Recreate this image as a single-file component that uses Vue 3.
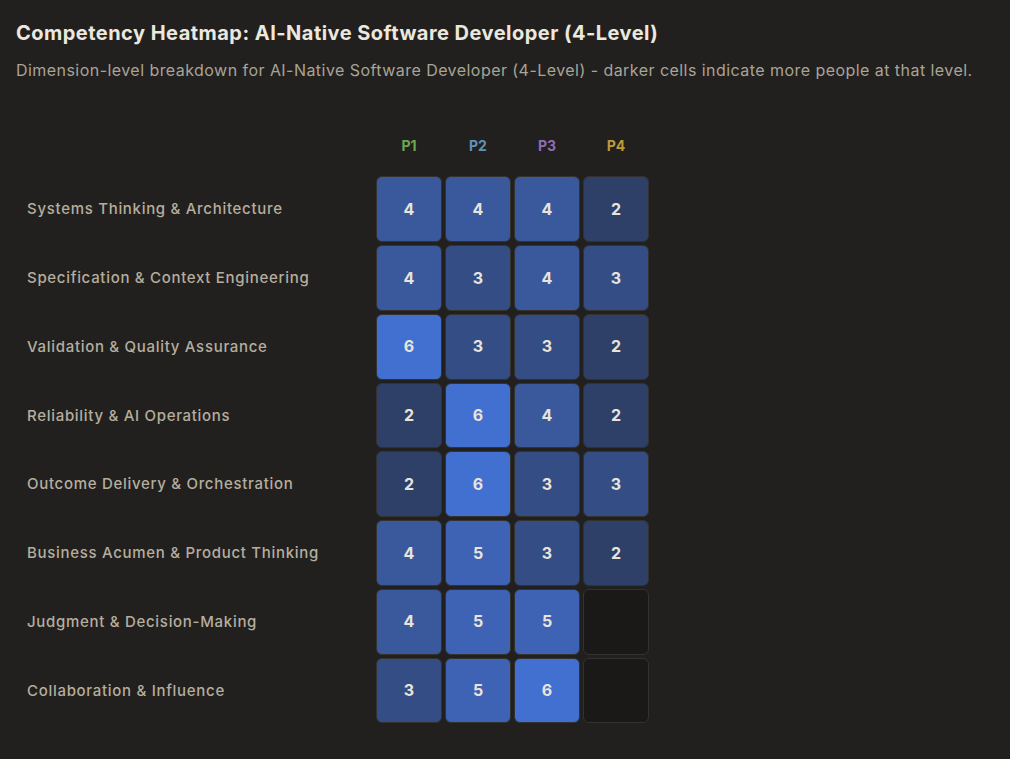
<template>
  <div class="page">
    <h2 class="title">Competency Heatmap: AI-Native Software Developer (4-Level)</h2>
    <p class="subtitle">Dimension-level breakdown for AI-Native Software Developer (4-Level) - darker cells indicate more people at that level.</p>

    <div class="heatmap">
      <div class="corner"></div>
      <div v-for="level in levels" :key="level.name" class="level" :style="{ color: level.color }">
        {{ level.name }}
      </div>

      <template v-for="row in rows" :key="row.name">
        <div class="dimension">{{ row.name }}</div>
        <div
          v-for="(count, i) in row.counts"
          :key="i"
          class="cell"
          :style="{ background: shade(count) }"
        >
          {{ count || '' }}
        </div>
      </template>
    </div>
  </div>
</template>

<script setup>
const levels = [
  { name: 'P1', color: '#6aa84f' },
  { name: 'P2', color: '#5b93bd' },
  { name: 'P3', color: '#8e6cb8' },
  { name: 'P4', color: '#c09a35' }
];

const rows = [
  { name: 'Systems Thinking & Architecture', counts: [4, 4, 4, 2] },
  { name: 'Specification & Context Engineering', counts: [4, 3, 4, 3] },
  { name: 'Validation & Quality Assurance', counts: [6, 3, 3, 2] },
  { name: 'Reliability & AI Operations', counts: [2, 6, 4, 2] },
  { name: 'Outcome Delivery & Orchestration', counts: [2, 6, 3, 3] },
  { name: 'Business Acumen & Product Thinking', counts: [4, 5, 3, 2] },
  { name: 'Judgment & Decision-Making', counts: [4, 5, 5, 0] },
  { name: 'Collaboration & Influence', counts: [3, 5, 6, 0] }
];

// cell colour by head count
const shades = {
  0: '#1a1917',
  2: '#2e4068',
  3: '#344d85',
  4: '#3a589c',
  5: '#3e63b4',
  6: '#4270d0'
};
const shade = (count) => shades[count];
</script>

<style scoped>
.page {
  padding: 20px 16px 0;
  color: #e8e4dc;
  font-family: Inter, sans-serif;
}

.title {
  margin: 0;
  font-size: 20px;
  line-height: 26px;
  font-weight: 700;
  letter-spacing: 0.47px;
  color: #ece8df;
}

.subtitle {
  margin: 12px 0 0;
  font-size: 16px;
  line-height: 24px;
  letter-spacing: 0.45px;
  color: #a8a498;
  white-space: nowrap;
}

.heatmap {
  display: grid;
  grid-template-columns: 357px repeat(4, 66px);
  grid-template-rows: 53.4px;
  grid-auto-rows: 65.75px;
  gap: 3px;
  margin-top: 38px;
}

.level {
  display: flex;
  align-items: center;
  justify-content: center;
  padding-bottom: 3.4px;
  font-size: 14px;
  font-weight: 700;
}

.dimension {
  display: flex;
  align-items: center;
  padding: 0 0 1px 11px;
  font-size: 15px;
  font-weight: 500;
  letter-spacing: 0.7px;
  color: #b5ae9f;
}

.cell {
  display: flex;
  align-items: center;
  justify-content: center;
  box-sizing: border-box;
  padding-bottom: 1px;
  border: 1px solid #33322f;
  border-radius: 6px;
  font-size: 16px;
  font-weight: 700;
  color: #e8e4dc;
}
</style>

<style>
html, body {
  background: #22201e;
}
</style>
